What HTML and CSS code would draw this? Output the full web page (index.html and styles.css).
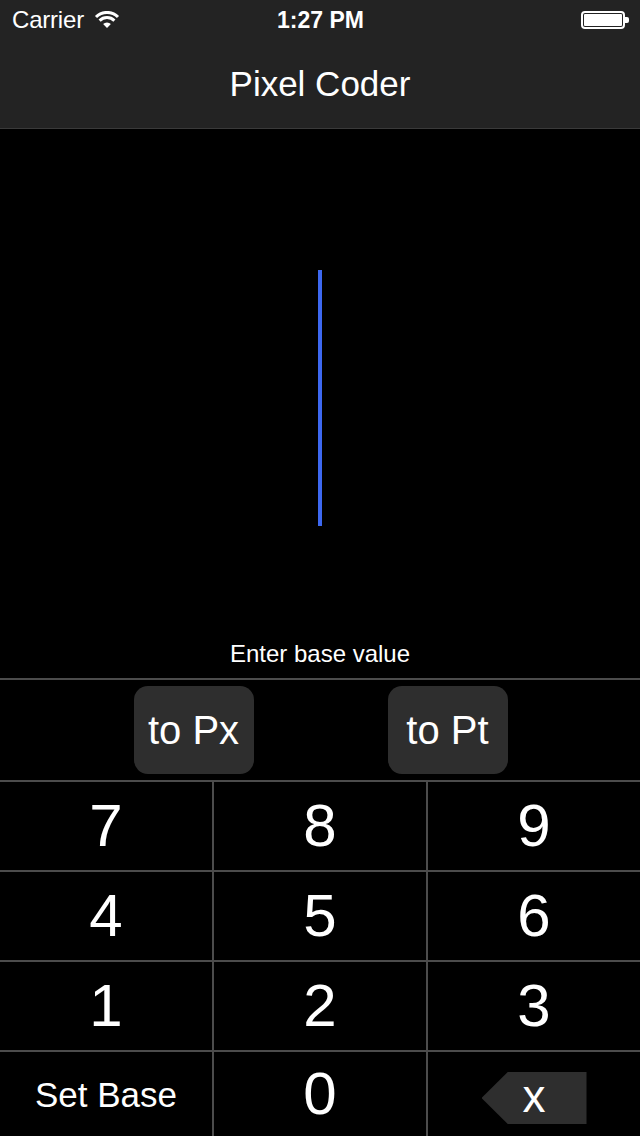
FILE: index.html
```html
<!DOCTYPE html>
<html lang="en">
<head>
<meta charset="utf-8">
<title>Pixel Coder</title>
<link rel="stylesheet" href="styles.css">
</head>
<body>
<div class="app">
  <header class="header">
    <div class="status">
      <div class="status-left">
        <span class="carrier">Carrier</span>
        <svg class="wifi" width="26" height="18" viewBox="0 0 26 18">
          <path d="M13 17 L9.1 13.1 A5.5 5.5 0 0 1 16.9 13.1 Z" fill="#fff"/>
          <path d="M5.6 9.6 A10.5 10.5 0 0 1 20.4 9.6" fill="none" stroke="#fff" stroke-width="3"/>
          <path d="M2 6 A15.5 15.5 0 0 1 24 6" fill="none" stroke="#fff" stroke-width="3"/>
        </svg>
      </div>
      <div class="time">1:27 PM</div>
      <div class="status-right">
        <div class="battery"><div class="battery-fill"></div></div>
        <div class="battery-nub"></div>
      </div>
    </div>
    <div class="navbar">Pixel Coder</div>
  </header>

  <section class="display">
    <div class="cursor"></div>
    <div class="hint">Enter base value</div>
  </section>

  <section class="convert">
    <button class="conv-btn">to Px</button>
    <button class="conv-btn">to Pt</button>
  </section>

  <section class="keypad">
    <div class="key">7</div>
    <div class="key">8</div>
    <div class="key">9</div>
    <div class="key">4</div>
    <div class="key">5</div>
    <div class="key">6</div>
    <div class="key">1</div>
    <div class="key">2</div>
    <div class="key">3</div>
    <div class="key key-text">Set Base</div>
    <div class="key">0</div>
    <div class="key"><div class="bksp">x</div></div>
  </section>
</div>
</body>
</html>
```

FILE: styles.css
```css
* { box-sizing: border-box; }

html, body {
  margin: 0;
  padding: 0;
  background: #000;
}

body {
  font-family: "Liberation Sans", Arial, Helvetica, sans-serif;
  color: #fff;
}

.app {
  width: 640px;
  height: 1136px;
  display: flex;
  flex-direction: column;
  overflow: hidden;
}

.header {
  background: #232323;
  border-bottom: 1px solid #3a3a3a;
  height: 129px;
  flex: none;
}

.status {
  height: 40px;
  display: grid;
  grid-template-columns: 1fr auto 1fr;
  align-items: center;
  padding: 0 11px 0 12px;
}

.status-left {
  display: flex;
  align-items: center;
  gap: 10px;
}

.carrier {
  font-size: 24px;
  line-height: 40px;
  letter-spacing: -0.2px;
}

.wifi {
  display: block;
  margin-top: -1px;
}

.time {
  font-size: 23px;
  font-weight: bold;
  line-height: 40px;
}

.status-right {
  display: flex;
  align-items: center;
  justify-content: flex-end;
}

.battery {
  width: 44px;
  height: 18px;
  border: 2px solid #fff;
  border-radius: 4px;
  padding: 1px;
  margin-top: 0px;
}

.battery-fill {
  width: 100%;
  height: 100%;
  background: #fff;
  border-radius: 1px;
}

.battery-nub {
  width: 4px;
  height: 6px;
  background: #fff;
  border-radius: 0 2px 2px 0;
}

.navbar {
  height: 88px;
  line-height: 88px;
  text-align: center;
  font-size: 35px;
}

.display {
  height: 549px;
  flex: none;
  display: flex;
  flex-direction: column;
  align-items: center;
  padding-top: 141px;
  padding-bottom: 10px;
}

.cursor {
  width: 4px;
  height: 256px;
  background: #3d68f0;
}

.hint {
  margin-top: auto;
  font-size: 24px;
  line-height: 28px;
}

.convert {
  height: 102px;
  flex: none;
  border-top: 2px solid #4c4c4c;
  display: flex;
  justify-content: center;
  align-items: flex-start;
  padding-top: 6px;
  padding-left: 1px;
  gap: 134px;
}

.conv-btn {
  width: 120px;
  height: 88px;
  border: 0;
  border-radius: 14px;
  background: #2e2e2e;
  color: #fff;
  font-family: "Liberation Sans", Arial, Helvetica, sans-serif;
  font-size: 40px;
  padding: 0;
  line-height: 88px;
}

.keypad {
  flex: 1;
  display: grid;
  grid-template-columns: 212px 212px 212px;
  grid-template-rows: 88px 88px 88px 1fr;
  gap: 2px;
  padding-top: 2px;
  background: #4c4c4c;
}

.key {
  background: #000;
  display: flex;
  align-items: center;
  justify-content: center;
  font-size: 60px;
  line-height: 1;
}

.key-text {
  font-size: 35px;
}

.bksp {
  width: 105px;
  height: 52px;
  margin-top: 8px;
  background: #2e2e2e;
  clip-path: polygon(25% 0, 100% 0, 100% 100%, 25% 100%, 0 50%);
  display: flex;
  align-items: center;
  justify-content: center;
  font-size: 46px;
  line-height: 52px;
  padding-bottom: 4px;
}
```
